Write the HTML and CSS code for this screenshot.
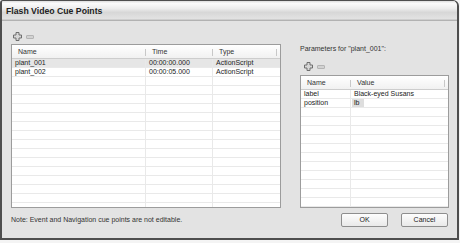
FILE: index.html
```html
<!DOCTYPE html>
<html lang="en">
<head>
  <meta charset="UTF-8">
  <title>Flash Video Cue Points</title>
  <link rel="stylesheet" href="styles.css">
</head>
<body>
  <div class="window">
    <!-- Title bar -->
    <div class="titlebar">Flash Video Cue Points</div>

    <div class="main">
      <!-- Cue point list -->
      <div class="left">
        <div class="tools">
          <svg class="icon-add" width="9" height="9" viewBox="0 0 9 9"><path d="M3 0.5h3v2.5h2.5v3h-2.5v2.5h-3v-2.5h-2.5v-3h2.5z" fill="#d6d6d6" stroke="#6e6e6e" stroke-width="1"/></svg>
          <span class="icon-remove"></span>
        </div>
        <div class="grid cues">
          <div class="row head"><div class="cell">Name</div><div class="cell">Time</div><div class="cell">Type</div></div>
          <div class="row selected"><div class="cell">plant_001</div><div class="cell">00:00:00.000</div><div class="cell">ActionScript</div></div>
          <div class="row"><div class="cell">plant_002</div><div class="cell">00:00:05.000</div><div class="cell">ActionScript</div></div>
          <div class="row"><div class="cell"></div><div class="cell"></div><div class="cell"></div></div>
          <div class="row"><div class="cell"></div><div class="cell"></div><div class="cell"></div></div>
          <div class="row"><div class="cell"></div><div class="cell"></div><div class="cell"></div></div>
          <div class="row"><div class="cell"></div><div class="cell"></div><div class="cell"></div></div>
          <div class="row"><div class="cell"></div><div class="cell"></div><div class="cell"></div></div>
          <div class="row"><div class="cell"></div><div class="cell"></div><div class="cell"></div></div>
          <div class="row"><div class="cell"></div><div class="cell"></div><div class="cell"></div></div>
          <div class="row"><div class="cell"></div><div class="cell"></div><div class="cell"></div></div>
          <div class="row"><div class="cell"></div><div class="cell"></div><div class="cell"></div></div>
          <div class="row"><div class="cell"></div><div class="cell"></div><div class="cell"></div></div>
          <div class="row"><div class="cell"></div><div class="cell"></div><div class="cell"></div></div>
          <div class="row"><div class="cell"></div><div class="cell"></div><div class="cell"></div></div>
          <div class="row"><div class="cell"></div><div class="cell"></div><div class="cell"></div></div>
          <div class="row"><div class="cell"></div><div class="cell"></div><div class="cell"></div></div>
          <div class="row"><div class="cell"></div><div class="cell"></div><div class="cell"></div></div>
        </div>
      </div>

      <!-- Parameters -->
      <div class="right">
        <div class="params-label">Parameters for "plant_001":</div>
        <div class="tools">
          <svg class="icon-add" width="9" height="9" viewBox="0 0 9 9"><path d="M3 0.5h3v2.5h2.5v3h-2.5v2.5h-3v-2.5h-2.5v-3h2.5z" fill="#d6d6d6" stroke="#6e6e6e" stroke-width="1"/></svg>
          <span class="icon-remove"></span>
        </div>
        <div class="grid params">
          <div class="row head"><div class="cell">Name</div><div class="cell">Value</div></div>
          <div class="row"><div class="cell">label</div><div class="cell">Black-eyed Susans</div></div>
          <div class="row"><div class="cell">position</div><div class="cell"><span class="edit">lb</span></div></div>
          <div class="row"><div class="cell"></div><div class="cell"></div></div>
          <div class="row"><div class="cell"></div><div class="cell"></div></div>
          <div class="row"><div class="cell"></div><div class="cell"></div></div>
          <div class="row"><div class="cell"></div><div class="cell"></div></div>
          <div class="row"><div class="cell"></div><div class="cell"></div></div>
          <div class="row"><div class="cell"></div><div class="cell"></div></div>
          <div class="row"><div class="cell"></div><div class="cell"></div></div>
          <div class="row"><div class="cell"></div><div class="cell"></div></div>
          <div class="row"><div class="cell"></div><div class="cell"></div></div>
          <div class="row"><div class="cell"></div><div class="cell"></div></div>
          <div class="row"><div class="cell"></div><div class="cell"></div></div>
        </div>
      </div>
    </div>

    <!-- Footer -->
    <div class="footer">
      <div class="note">Note: Event and Navigation cue points are not editable.</div>
      <div class="buttons">
        <button class="btn">OK</button>
        <button class="btn">Cancel</button>
      </div>
    </div>
  </div>
</body>
</html>
```

FILE: styles.css
```css
* {
  margin: 0;
  padding: 0;
  box-sizing: border-box;
}

body {
  background: #f4f4f4;
  font-family: 'Liberation Sans', Arial, sans-serif;
  font-size: 7px;
  color: #222;
}

/* === WINDOW === */
.window {
  width: 459px;
  height: 240px;
  background: #e3e3e3;
  border: 2px solid #4e4e4e;
  border-top-width: 1px;
  border-radius: 3px 6px 0 0;
  overflow: hidden;
}

.titlebar {
  height: 20px;
  padding: 0 0 0 4px;
  display: flex;
  align-items: center;
  font-size: 8.7px;
  font-weight: 700;
  color: #222;
  background: linear-gradient(#dcdcdc 0, #fbfbfb 12%, #ececec 40%, #d7d7d7 60%, #e2e2e2 92%, #c4c4c4 100%);
  border-bottom: 1px solid #b2b2b2;
}

.main {
  display: flex;
  gap: 19px;
  padding: 0 8px 0 9px;
}

.left {
  width: 270px;
  padding-top: 11px;
}

.right {
  width: 149px;
  padding-top: 23px;
}

/* === TOOLS === */
.tools {
  height: 9px;
  display: flex;
  align-items: center;
  gap: 4px;
  padding-left: 2px;
}

.left .tools {
  margin-bottom: 3px;
}

.right .tools {
  margin: 9px 0 4px 2px;
}

.icon-add {
  display: block;
}

.icon-remove {
  width: 8px;
  height: 4px;
  border-radius: 1px;
  background: #d2d2d2;
  border: 1px solid #b4b4b4;
}

.params-label {
  height: 9px;
  line-height: 9px;
  color: #333;
}

/* === GRIDS === */
.grid {
  background: #fff;
  border: 1px solid #9c9c9c;
  overflow: hidden;
}

.cues {
  height: 164px;
}

.params {
  height: 133px;
}

.row {
  display: grid;
  height: 9px;
  border-bottom: 1px solid #e9e9e9;
}

.cues .row {
  grid-template-columns: 134px 67px 1fr;
}

.params .row {
  grid-template-columns: 50px 1fr;
}

.cell {
  line-height: 8px;
  padding-left: 3px;
  white-space: nowrap;
  overflow: hidden;
  border-right: 1px solid #e9e9e9;
}

.cell:last-child {
  border-right: none;
}

.row.head {
  height: 14px;
  background: linear-gradient(#ffffff, #f1f1f1);
  border-bottom: 1px solid #cdcdcd;
}

.row.head .cell {
  line-height: 13px;
  padding-left: 6px;
  color: #333;
  border-right: none;
  position: relative;
}

.row.head .cell::after {
  content: '';
  position: absolute;
  right: 0;
  top: 4px;
  height: 7px;
  border-right: 1px solid #c8c8c8;
}

.cues .row.head .cell:last-child::after,
.params .row.head .cell:last-child::after {
  right: 3px;
}

.row.selected {
  background: #e6e6e6;
}

.edit {
  display: inline-block;
  width: 12px;
  margin-left: -2px;
  padding-left: 2px;
  background: #dedede;
}

/* === FOOTER === */
.footer {
  display: flex;
  justify-content: space-between;
  align-items: center;
  padding: 4px 9px 0 9px;
  height: 19px;
}

.note {
  color: #333;
}

.buttons {
  display: flex;
  gap: 13px;
}

.btn {
  width: 47px;
  height: 14px;
  font-family: 'Liberation Sans', Arial, sans-serif;
  font-size: 7px;
  color: #222;
  background: linear-gradient(#fdfdfd, #e9e9e9);
  border: 1px solid #8e8e8e;
  border-radius: 2px;
}
```
